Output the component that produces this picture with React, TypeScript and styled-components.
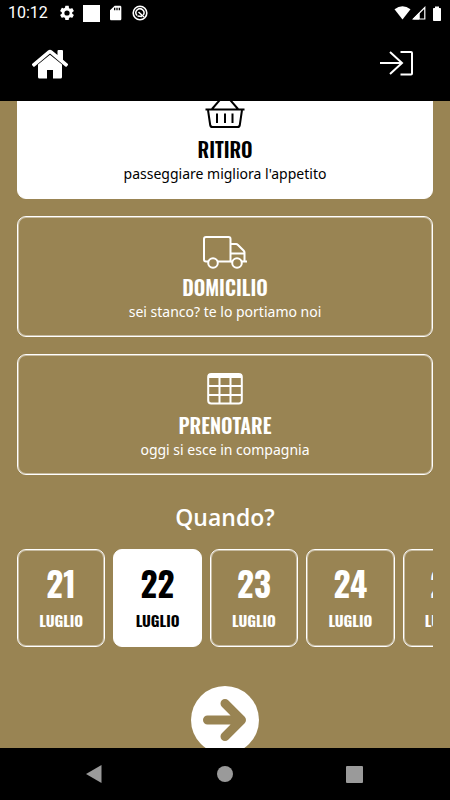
import { useLayoutEffect, useRef, useState } from "react";
import styled, { createGlobalStyle, css } from "styled-components";

const GOLD = "#998453";
const display = '"Oswald", "Liberation Sans Narrow", "Open Sans", sans-serif';
const body = '"Open Sans", "Noto Sans", sans-serif';

const GlobalStyle = createGlobalStyle`
  *, *::before, *::after { box-sizing: border-box; }
  body { margin: 0; background: #000; font-family: ${body}; }
  button { font: inherit; color: inherit; padding: 0; margin: 0; border: 0; background: none; cursor: pointer; }
  svg { display: block; }
`;

const Screen = styled.div`
  display: flex;
  flex-direction: column;
  height: 100vh;
  background: ${GOLD};
`;

const StatusBar = styled.div`
  display: flex;
  align-items: center;
  flex: none;
  height: 26px;
  padding: 0 8px;
  background: #000;
  color: #fff;
  font: 16px/28px Roboto, sans-serif;
`;

const StatusIcons = styled.div`
  display: flex;
  align-items: center;
  gap: 8px;
  margin-left: 11px;
`;

const SignalIcons = styled.div`
  display: flex;
  align-items: center;
  gap: 1px;
  margin-left: auto;
`;

const AppBar = styled.header`
  display: flex;
  align-items: center;
  justify-content: space-between;
  flex: none;
  height: 75px;
  padding: 0 36px 0 30px;
  background: #000;
  color: #fff;
`;

const Scroller = styled.main`
  flex: 1;
  min-height: 0;
  overflow-y: auto;
  scrollbar-width: none;
`;

const Content = styled.div`
  display: flex;
  flex-direction: column;
  align-items: center;
  padding: 0 17px 18px;
`;

const Choices = styled.div`
  display: flex;
  flex-direction: column;
  gap: 17px;
  width: 100%;
`;

const selectable = css<{ $active: boolean }>`
  border: 1px solid #fff;
  border-radius: 9px;
  box-shadow: inset 0 0 0 1px ${(p) => (p.$active ? "#fff" : "rgba(255, 255, 255, 0.45)")};
  background: ${(p) => (p.$active ? "#fff" : "transparent")};
  color: ${(p) => (p.$active ? "#000" : "#fff")};
`;

const Choice = styled.button<{ $active: boolean }>`
  display: flex;
  flex-direction: column;
  align-items: center;
  height: 121px;
  && {
    ${selectable}
    padding-top: 13px;
  }
`;

const ChoiceTitle = styled.span`
  margin-top: 3px;
  font: 600 20px/28px ${display};
`;

const ChoiceNote = styled.span`
  font: 400 14px/22px "Noto Sans", "Open Sans", sans-serif;
`;

const Question = styled.h2`
  margin: 26px 0 0;
  font-size: 23px;
  line-height: 32px;
  font-weight: 600;
  color: #fff;
`;

const Days = styled.div`
  display: flex;
  gap: 8px;
  width: 100%;
  margin-top: 16px;
  overflow-x: auto;
  scrollbar-width: none;
`;

const Day = styled.button<{ $active: boolean }>`
  display: flex;
  flex: 0 0 21.25%;
  flex-direction: column;
  align-items: center;
  height: 98px;
  && {
    ${selectable}
    padding-top: 13px;
  }
`;

const DayNumber = styled.span`
  font: 700 33px/42px ${display};
`;

const DayMonth = styled.span`
  margin-top: 3px;
  font: 700 15px/24px ${display};
`;

const Next = styled.button`
  && {
    flex: none;
    width: 68px;
    height: 68px;
    margin-top: 39px;
    border-radius: 50%;
    background: #fff;
    color: ${GOLD};
  }
`;

const NavBar = styled.nav`
  display: flex;
  align-items: center;
  justify-content: space-between;
  flex: none;
  height: 52px;
  padding: 0 83px;
  background: #000;
  color: #9a9a9a;
`;

const GearIcon = () => (
  <svg width="16" height="16" viewBox="1 1 22 22" fill="currentColor">
    <path d="M19.140 12.940c.04-.3.06-.61.06-.94s-.02-.64-.07-.94l2.030-1.580a.49.49 0 0 0 .12-.61l-1.920-3.320a.49.49 0 0 0-.59-.22l-2.390.96a7 7 0 0 0-1.620-.94l-.36-2.540A.48.48 0 0 0 13.920 2h-3.840a.48.48 0 0 0-.47.41l-.36 2.540a7 7 0 0 0-1.620.94l-2.390-.96a.48.48 0 0 0-.59.22L2.740 8.870a.48.48 0 0 0 .12.61l2.030 1.580a7 7 0 0 0 0 1.880l-2.030 1.580a.49.49 0 0 0-.12.61l1.920 3.320c.12.22.37.29.59.22l2.390-.96c.5.38 1.030.7 1.620.94l.36 2.540c.05.24.24.41.48.41h3.840c.24 0 .44-.17.47-.41l.36-2.540a7 7 0 0 0 1.620-.94l2.390.96c.22.08.47 0 .59-.22l1.920-3.320a.48.48 0 0 0-.12-.61zM12 15.600a3.600 3.600 0 1 1 0-7.200 3.600 3.600 0 0 1 0 7.200z" />
  </svg>
);

const SquareIcon = () => (
  <svg width="17" height="17" viewBox="0 0 17 17"><path d="M0 0h17v17H0z" fill="currentColor" /></svg>
);

const SdCardIcon = () => (
  <svg width="16" height="16" viewBox="0 0 24 24" fill="currentColor">
    <path d="M18 1h-8L3 8v13c0 1.100.9 2 2 2h13c1.100 0 2-.9 2-2V3c0-1.100-.9-2-2-2zm-7 7H9V4h2v4zm3.500 0h-2V4h2v4zm3.500 0h-2V4h2v4z" />
  </svg>
);

const DndIcon = () => (
  <svg width="16" height="16" viewBox="0 0 16 16" fill="none" stroke="currentColor">
    <circle cx="8" cy="8" r="6.800" strokeWidth="1.600" />
    <path d="M5 10.500A4 4 0 1 1 11.300 10" strokeWidth="1.500" />
    <path d="M6.500 7 12 12M5.500 11l4.500.5" strokeWidth="1.600" />
  </svg>
);

const WifiIcon = () => (
  <svg width="17" height="14" viewBox="0 0 17 14"><path d="M.5 3.200Q8.500-2.600 16.500 3.200L8.500 13.500z" fill="currentColor" /></svg>
);

const CellIcon = () => (
  <svg width="14" height="14" viewBox="0 0 14 14" fill="none" stroke="currentColor">
    <path d="M12.800 1.500V13H1.300z" strokeWidth="1.200" />
    <path d="M7 7.300V13M1.300 13 7 7.300V13z" strokeWidth="1" fill="currentColor" />
  </svg>
);

const BatteryIcon = () => (
  <svg width="15" height="15" viewBox="0 0 15 15" fill="currentColor">
    <path d="M6 2h2V.5h4V2h1.200q.8 0 .8.800v11.400q0 .8-.8.800H6.800q-.8 0-.8-.8V2.800Q6 2 6.800 2z" />
  </svg>
);

const HomeIcon = () => (
  <svg width="40" height="32" viewBox="0 0 40 32" fill="currentColor">
    <path d="M8 16.500 20 6.800l12 9.700V29q0 1.500-1.500 1.500H23V22h-6v8.500H9.500Q8 30.500 8 29z" />
    <path d="M18 2.500q2-1.600 4 0L27.500 7V3q0-1 1-1H32q1 0 1 1v8.700l4.700 4q.8.700.1 1.500l-1 1.200q-.7.8-1.500.1L20 5.500 4.700 18.500q-.8.700-1.500-.1l-1-1.200q-.7-.8.1-1.500z" />
  </svg>
);

const LoginIcon = () => (
  <svg width="34" height="28" viewBox="0 0 34 28" fill="none" stroke="currentColor" strokeWidth="2">
    <path d="M0 13h22M10 2l12 11-12 11" />
    <path d="M20.500 2H31q1 0 1 1v20.500q0 1-1 1H20.500" />
  </svg>
);

const BasketIcon = () => (
  <svg width="40" height="40" viewBox="0 0 40 40" fill="none" stroke="currentColor" strokeWidth="2">
    <path d="M.5 17.500h39M7 17 17 5.500h6L33 17" />
    <path d="M3 18l2.200 15q.3 2 2.300 2h25q2 0 2.300-2L37 18" />
    <path d="M12 21.500v9.500M20 21.500v9.500M27.500 21.500v9.500" />
  </svg>
);

const TruckIcon = () => (
  <svg width="44" height="40" viewBox="0 0 44 40" fill="none" stroke="currentColor" strokeWidth="2">
    <path d="M5 31.500H3q-2 0-2-2V9q0-2 2-2h22.500q2 0 2 2v22.500H15" />
    <path d="M27.500 14H33q1 0 2 1l5.500 5.500q1 1 1 2v9M27.500 23.500h14M27.500 31.500h2M38 31.500h6" />
    <circle cx="10" cy="33" r="4.800" />
    <circle cx="34" cy="33" r="4.800" />
  </svg>
);

const TableIcon = () => (
  <svg width="36" height="40" viewBox="0 0 36 40" fill="none" stroke="currentColor" strokeWidth="2">
    <rect x="1.200" y="6" width="33.600" height="29.500" rx="3" />
    <path d="M1.500 8h33" strokeWidth="4" />
    <path d="M1 18h34M1 27h34M12.500 9v27M23.500 9v27" />
  </svg>
);

const ArrowIcon = () => (
  <svg width="68" height="68" viewBox="0 0 68 68" fill="none" stroke="currentColor" strokeWidth="9" strokeLinecap="round" strokeLinejoin="round">
    <path d="M16.500 34H48M34 17.500 50.500 34 34 50.500" />
  </svg>
);

const BackIcon = () => (
  <svg width="22" height="20" viewBox="0 0 22 20"><path d="M18.500 1v18L3 10z" fill="currentColor" /></svg>
);

const CircleIcon = () => (
  <svg width="16" height="16" viewBox="0 0 16 16"><circle cx="8" cy="8" r="8" fill="currentColor" /></svg>
);

const RecentsIcon = () => (
  <svg width="22" height="17" viewBox="0 0 22 17"><rect x="1" width="17" height="17" rx="1" fill="currentColor" /></svg>
);

const choices = [
  { title: "RITIRO", note: "passeggiare migliora l'appetito", Icon: BasketIcon },
  { title: "DOMICILIO", note: "sei stanco? te lo portiamo noi", Icon: TruckIcon },
  { title: "PRENOTARE", note: "oggi si esce in compagnia", Icon: TableIcon },
];

const days = [21, 22, 23, 24, 25];

export default function App() {
  const scroller = useRef<HTMLElement>(null);
  const [choice, setChoice] = useState("RITIRO");
  const [day, setDay] = useState(22);

  useLayoutEffect(() => {
    if (scroller.current) scroller.current.scrollTop = 23;
  }, []);

  return (
    <Screen>
      <GlobalStyle />
      <StatusBar>
        10:12
        <StatusIcons><GearIcon /><SquareIcon /><SdCardIcon /><DndIcon /></StatusIcons>
        <SignalIcons><WifiIcon /><CellIcon /><BatteryIcon /></SignalIcons>
      </StatusBar>
      <AppBar>
        <button aria-label="Home"><HomeIcon /></button>
        <button aria-label="Accedi"><LoginIcon /></button>
      </AppBar>
      <Scroller ref={scroller}>
        <Content>
          <Choices>
            {choices.map(({ title, note, Icon }) => (
              <Choice key={title} $active={choice === title} aria-pressed={choice === title} onClick={() => setChoice(title)}>
                <Icon />
                <ChoiceTitle>{title}</ChoiceTitle>
                <ChoiceNote>{note}</ChoiceNote>
              </Choice>
            ))}
          </Choices>
          <Question>Quando?</Question>
          <Days>
            {days.map((d) => (
              <Day key={d} $active={day === d} aria-pressed={day === d} onClick={() => setDay(d)}>
                <DayNumber>{d}</DayNumber>
                <DayMonth>LUGLIO</DayMonth>
              </Day>
            ))}
          </Days>
          <Next aria-label="Avanti"><ArrowIcon /></Next>
        </Content>
      </Scroller>
      <NavBar>
        <button aria-label="Indietro"><BackIcon /></button>
        <button aria-label="Schermata principale"><CircleIcon /></button>
        <button aria-label="Recenti"><RecentsIcon /></button>
      </NavBar>
    </Screen>
  );
}
